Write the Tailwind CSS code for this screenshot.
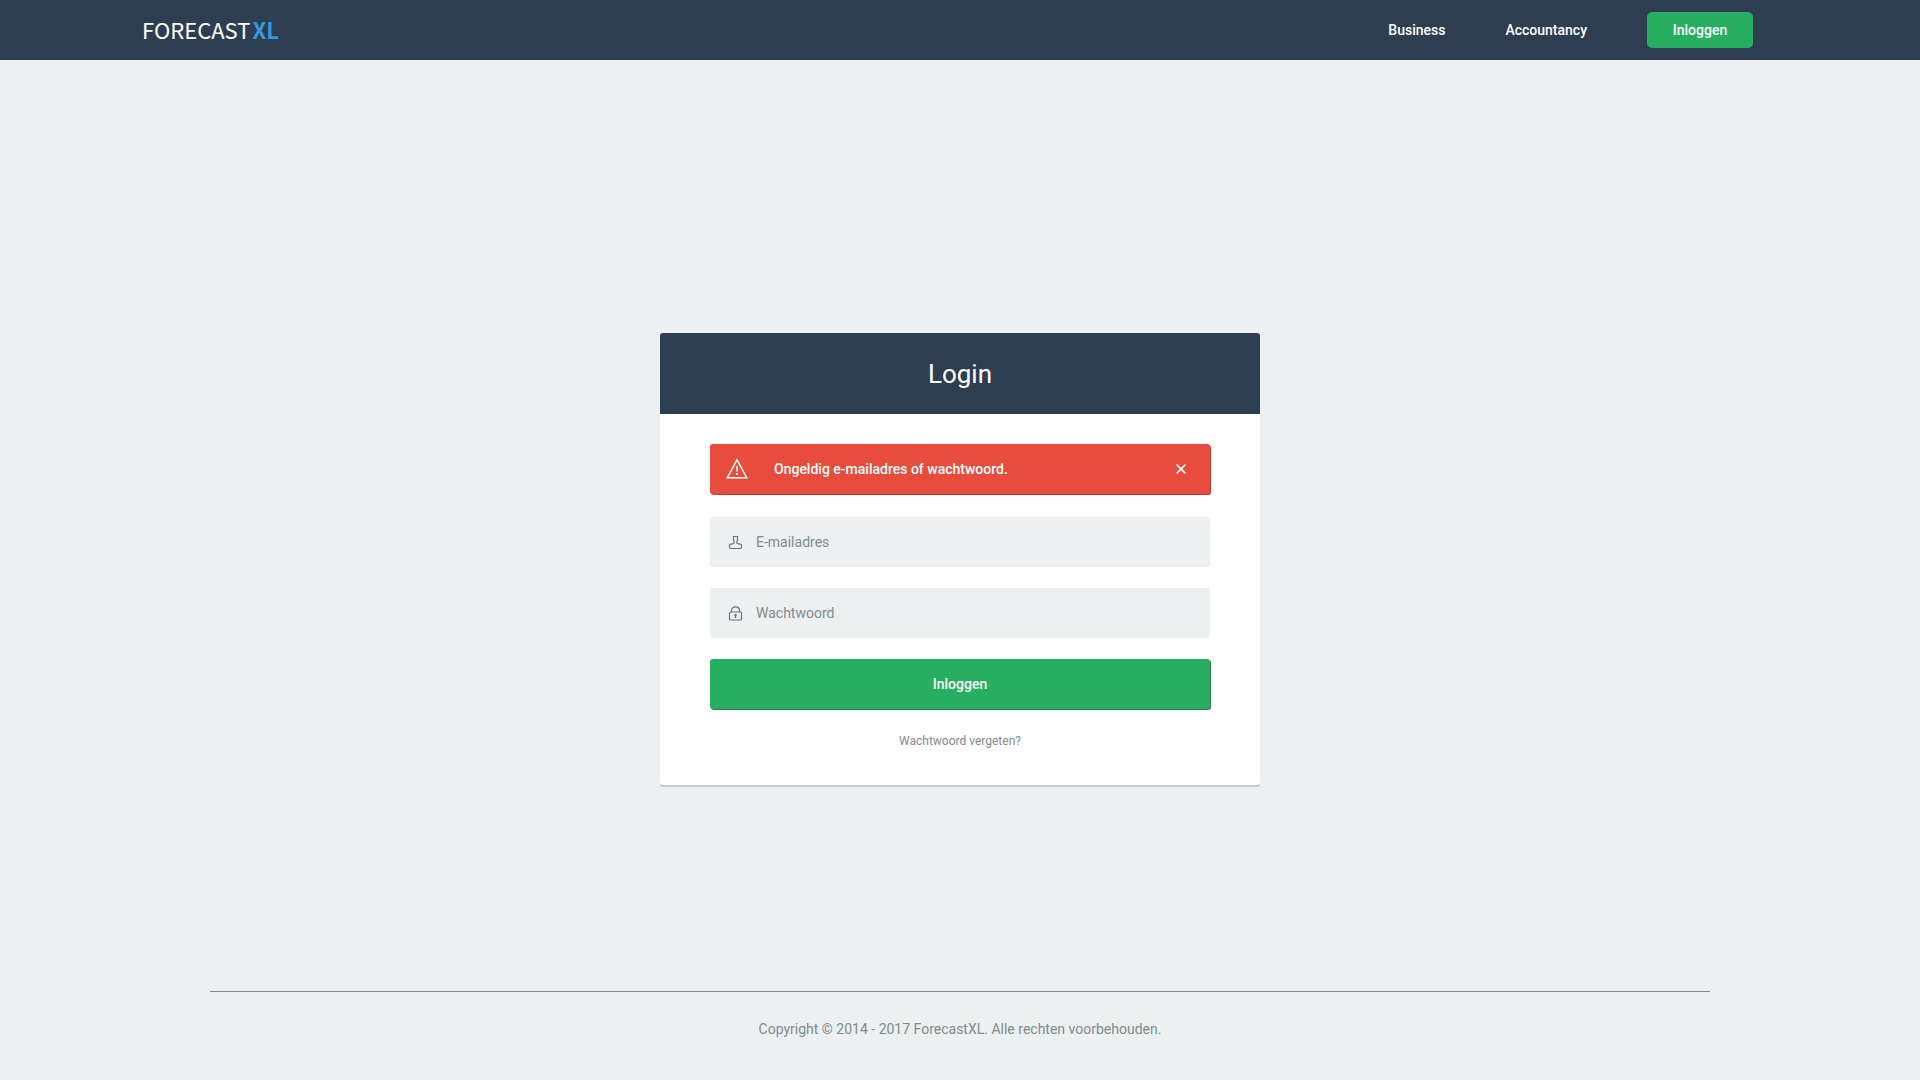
<!DOCTYPE html>
<html lang="nl">
<head>
<meta charset="utf-8">
<meta name="viewport" content="width=device-width, initial-scale=1">
<title>ForecastXL - Login</title>
<script src="https://cdn.jsdelivr.net/npm/@tailwindcss/browser@4"></script>
</head>
<body class="flex min-h-screen flex-col bg-[#ecf0f1] font-[Roboto,sans-serif] text-sm text-[#7f8c8d]">
  <header class="flex h-[60px] items-center justify-between bg-[#2c3e50] pl-[142px] pr-[167px] text-white">
    <a href="#" class="flex gap-0.5 pb-0.5 font-['Noto_Sans_CJK_SC',sans-serif] text-[22px] leading-8 font-medium"><span class="font-normal">FORECAST</span><span class="font-bold text-[#3498db]">XL</span></a>
    <nav class="flex items-center gap-[60px] font-medium">
      <a href="#">Business</a>
      <a href="#">Accountancy</a>
      <button type="button" class="h-9 w-[106px] rounded-[5px] bg-[#27ae60] font-medium">Inloggen</button>
    </nav>
  </header>

  <main class="flex grow items-center justify-center pt-[67px]">
    <section class="w-full max-w-[600px] rounded-[3px] bg-white shadow-[0_2px_0_#c5cacb]">
      <h1 class="rounded-t-[3px] bg-[#2c3e50] pt-[25px] pb-[23px] text-center text-[26px] leading-[33px] text-white">Login</h1>
      <form class="flex flex-col px-[50px] pt-[30px] pb-9">
        <div role="alert" class="mb-[23px] flex h-[50px] items-center rounded-[3px] bg-[#e74c3c] pl-4 pr-5 font-medium text-white shadow-[1px_1px_0_#c0392b]">
          <svg class="mr-[26px] h-[22px] w-[22px]" viewBox="0 0 22 22" fill="none" stroke="currentColor" stroke-width="1.5"><path d="M11 1.8 1.3 19.7h19.4z"/><path d="M11 8v5.5M11 15v2"/></svg>
          <p class="grow">Ongeldig e-mailadres of wachtwoord.</p>
          <button type="button" aria-label="Sluiten" class="p-1">
            <svg class="h-[10px] w-[10px]" viewBox="0 0 10 10" fill="none" stroke="currentColor" stroke-width="1.7"><path d="m.6.6 8.8 8.8M9.4.6.6 9.4"/></svg>
          </button>
        </div>
        <label class="mb-[21px] flex h-[50px] items-center rounded-[3px] bg-[#ecf0f1] pl-[18px]">
          <svg class="mr-[13px] h-[15px] w-[15px] shrink-0" viewBox="0 0 15 15" fill="none" stroke="#6c7677" stroke-width="1.2"><path d="M5.500 1.500h4v3.500c0 1-.8 1.300-.8 2.300 0 1.200.6 1.400 1.800 1.600l1.700.3c1 .2 1.300.7 1.300 1.400v1.600c0 .9-.3 1.300-1.200 1.300H2.700c-.9 0-1.200-.4-1.200-1.300v-1.600c0-.7.3-1.200 1.300-1.400l1.700-.3c1.200-.2 1.800-.4 1.800-1.600 0-1-.8-1.300-.8-2.300z"/></svg>
          <input type="email" aria-label="E-mailadres" placeholder="E-mailadres" class="h-full w-full bg-transparent outline-none placeholder:text-[#7f8c8d]">
        </label>
        <label class="mb-[21px] flex h-[50px] items-center rounded-[3px] bg-[#ecf0f1] pl-[18px]">
          <svg class="mr-[13px] h-[15px] w-[15px] shrink-0" viewBox="0 0 15 15" fill="none" stroke="#6c7677" stroke-width="1.2"><rect x="1.500" y="6" width="12" height="8" rx="1"/><path d="M3.500 6V4.500C3.500 2.300 5.200 .9 7.500 .9S11.500 2.300 11.500 4.500V6"/><path d="M7.500 12V9.500" stroke-width="1.300"/><circle cx="7.500" cy="9.200" r=".7"/></svg>
          <input type="password" aria-label="Wachtwoord" placeholder="Wachtwoord" class="h-full w-full bg-transparent outline-none placeholder:text-[#7f8c8d]">
        </label>
        <button type="submit" class="h-[50px] rounded-[3px] bg-[#27ae60] font-medium text-white shadow-[1px_1px_0_#2f7d5b]">Inloggen</button>
        <a href="#" class="mt-6 self-center text-xs leading-4">Wachtwoord vergeten?</a>
      </form>
    </section>
  </main>

  <footer class="mx-auto w-full max-w-[1500px] border-t border-[#7f8c8d] pt-[27px] pb-[41px] text-center">
    <p>Copyright © 2014 - 2017 ForecastXL. Alle rechten voorbehouden.</p>
  </footer>
</body>
</html>
